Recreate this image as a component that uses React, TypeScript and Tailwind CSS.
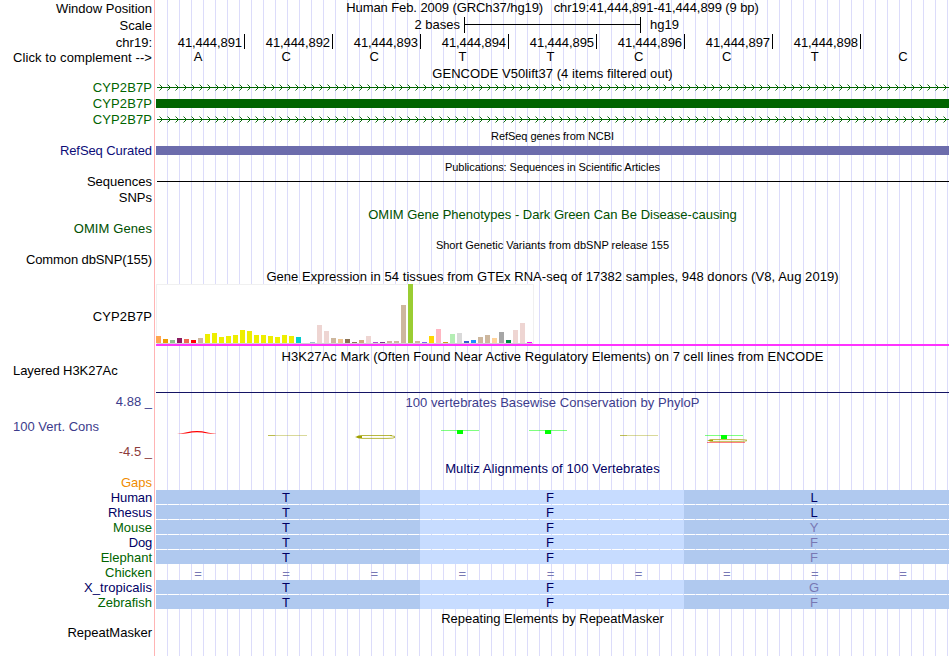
import React from "react";

interface Label {
  text: string;
  height: string;
  color?: string;
  left?: boolean;
  tracking?: string;
}

interface Species {
  name: string;
  residues: string[] | null;
}

const labels: Label[] = [
  { text: "Window Position", height: "h-[17px]" },
  { text: "Scale", height: "h-[17px]" },
  { text: "chr19:", height: "h-[15px]" },
  { text: "Click to complement -->", height: "h-[30px]", tracking: "tracking-[0.09px]" },
  { text: "CYP2B7P", height: "h-[16px]", color: "text-[#006400]", tracking: "tracking-[0.1px]" },
  { text: "CYP2B7P", height: "h-[16px]", color: "text-[#006400]", tracking: "tracking-[0.1px]" },
  { text: "CYP2B7P", height: "h-[31px]", color: "text-[#006400]", tracking: "tracking-[0.1px]" },
  { text: "RefSeq Curated", height: "h-[31px]", color: "text-[#0c0c78]", tracking: "tracking-[-0.08px]" },
  { text: "Sequences", height: "h-[16px]" },
  { text: "SNPs", height: "h-[31px]" },
  { text: "OMIM Genes", height: "h-[31px]", color: "text-[#005000]", tracking: "tracking-[0.1px]" },
  { text: "Common dbSNP(155)", height: "h-[57px]", tracking: "tracking-[-0.11px]" },
  { text: "CYP2B7P", height: "h-[54px]", tracking: "tracking-[0.1px]" },
  { text: "Layered H3K27Ac", height: "h-[31px]", left: true, tracking: "tracking-[-0.06px]" },
  { text: "4.88 _", height: "h-[25px]", color: "text-[#3c3c8c]" },
  { text: "100 Vert. Cons", height: "h-[25px]", color: "text-[#3c3c8c]", left: true },
  { text: "-4.5 _", height: "h-[31px]", color: "text-[#8c3c3c]" },
  { text: "Gaps", height: "h-[15px]", color: "text-[#f08c00]" },
  { text: "Human", height: "h-[15px]", color: "text-[#000064]", tracking: "tracking-[-0.15px]" },
  { text: "Rhesus", height: "h-[15px]", color: "text-[#000064]" },
  { text: "Mouse", height: "h-[15px]", color: "text-[#006400]" },
  { text: "Dog", height: "h-[15px]", color: "text-[#000064]", tracking: "tracking-[-0.2px]" },
  { text: "Elephant", height: "h-[15px]", color: "text-[#006400]" },
  { text: "Chicken", height: "h-[15px]", color: "text-[#006400]" },
  { text: "X_tropicalis", height: "h-[15px]", color: "text-[#000064]", tracking: "tracking-[0.06px]" },
  { text: "Zebrafish", height: "h-[30px]", color: "text-[#006400]" },
  { text: "RepeatMasker", height: "h-[15px]" },
];

const positions = [
  "41,444,891",
  "41,444,892",
  "41,444,893",
  "41,444,894",
  "41,444,895",
  "41,444,896",
  "41,444,897",
  "41,444,898",
];

const bases = ["A", "C", "C", "T", "T", "C", "C", "T", "C"];

// [height, colour] per GTEx tissue
const tissues: [number, string][] = [
  [7, "#ffa54f"], [4, "#ee9a00"], [3, "#8fbc8f"], [5, "#8b1c62"], [4, "#ee6a50"],
  [3, "#ff0000"], [5, "#cdb79e"], [9, "#eeee00"], [10, "#eeee00"], [6, "#eeee00"],
  [7, "#eeee00"], [8, "#eeee00"], [13, "#eeee00"], [12, "#eeee00"], [8, "#eeee00"],
  [8, "#eeee00"], [7, "#eeee00"], [6, "#eeee00"], [8, "#eeee00"], [7, "#eeee00"],
  [6, "#00cdcd"], [0, "#ee82ee"], [1, "#9ac0cd"], [18, "#eed5d2"], [12, "#eed5d2"],
  [5, "#cdb79e"], [4, "#eec591"], [4, "#8b7355"], [1, "#8b7355"], [3, "#cdaa7d"],
  [7, "#eed5d2"], [1, "#b452cd"], [1, "#7a378b"], [2, "#cdb79e"], [2, "#cdb79e"],
  [38, "#cdb79e"], [59, "#9acd32"], [2, "#cdb79e"], [1, "#7a67ee"], [7, "#ffd700"],
  [14, "#ffb6c1"], [1, "#cd9b1d"], [9, "#b4eeb4"], [10, "#d9d9d9"], [2, "#3a5fcd"],
  [3, "#1e90ff"], [6, "#cdb79e"], [8, "#cdb79e"], [5, "#ffd39b"], [11, "#a6a6a6"],
  [3, "#008b45"], [13, "#eed5d2"], [20, "#eed5d2"], [1, "#ff00ff"],
];

const species: Species[] = [
  { name: "Human", residues: ["T", "F", "L"] },
  { name: "Rhesus", residues: ["T", "F", "L"] },
  { name: "Mouse", residues: ["T", "F", "Y"] },
  { name: "Dog", residues: ["T", "F", "F"] },
  { name: "Elephant", residues: ["T", "F", "F"] },
  { name: "Chicken", residues: null },
  { name: "X_tropicalis", residues: ["T", "F", "G"] },
  { name: "Zebrafish", residues: ["T", "F", "F"] },
];

const Title = ({ text, className }: { text: string; className?: string }) => (
  <div className={`whitespace-pre text-center ${className ?? ""}`}>{text}</div>
);

const Intron = ({ className }: { className?: string }) => (
  <svg width="793" height="13" className={`block ${className ?? ""}`} fill="none" stroke="#006400">
    <path d="M1 6.5H793" />
    {Array.from({ length: 99 }, (_, i) => (
      <path key={i} d={`M${i * 8 + 3.5} 3.5L${i * 8 + 6.5} 6.5L${i * 8 + 3.5} 9.5`} strokeWidth="0.95" />
    ))}
  </svg>
);

const Expression = () => (
  <div className="flex h-[60px] w-[378px] items-end gap-[2px] border border-b-0 border-[#f0f0f0] bg-white shadow-[inset_0_-1px_0_#d2d2d2]">
    {tissues.map(([height, color], i) => (
      <div
        key={i}
        className="-mt-px mb-px w-[5px] shrink-0 first:-ml-px"
        style={{ height, backgroundColor: color }}
      />
    ))}
  </div>
);

const ConservationLogo = () => (
  <svg width="793" height="30" className="mt-[10px] block">
    <path d="M21 14Q31 12.5 36 11.3Q41 10.6 46 11.3Q52 12.8 61 14Q51 13.8 46 12.6Q41 11.8 36 12.6Q31 13.8 21 14Z" fill="#ff0000" />
    <path d="M112 15.5H151" stroke="#a0a000" strokeOpacity="0.4" />
    <path d="M112 15.5H119" stroke="#a0a000" strokeOpacity="0.5" />
    <path d="M236 15.5H205Q201 15.8 201 16.8Q201 18.2 206 18.4H231Q238 18.4 239 17.4" fill="none" stroke="#a0a000" strokeOpacity="0.75" />
    <path d="M234 15.5L239 16.5" stroke="#a0a000" strokeOpacity="0.7" />
    <path d="M199 17L202 16H206V18H202Z" fill="#a0a000" />
    <path d="M285 10.5H323M373 10.5H411M549 15.5H587" stroke="#00ff00" strokeOpacity="0.5" />
    <path d="M301 10H307V14H301ZM389 10H395V14H389ZM565 15H571V19H565Z" fill="#00ff00" />
    <path d="M464 15.5H502" stroke="#a0a000" strokeOpacity="0.4" />
    <path d="M464 15.5H471" stroke="#a0a000" strokeOpacity="0.45" />
    <path d="M591 20.2Q588 19.5 583 19.5H557Q553 19.6 553 20.4Q553 21.4 558 21.4H583Q590 21.4 591 20.7" fill="none" stroke="#a0a000" strokeWidth="0.9" strokeOpacity="0.75" />
    <path d="M551 20.5L554 19.7H557V21.3H554Z" fill="#a0a000" />
    <path d="M551 22.5H589" stroke="#ff0000" strokeOpacity="0.5" />
  </svg>
);

const Alignment = ({ residues }: Species) => {
  if (!residues) {
    return (
      <div className="flex h-[15px] pt-px text-[#7878b4]">
        {bases.map((_, i) => (
          <span key={i} className="flex-1 pr-1 text-center">=</span>
        ))}
      </div>
    );
  }
  return (
    <div className="mb-px flex h-[14px] text-center text-[#000064]">
      <span className="w-[264px] bg-[#b0c9ef] pr-1">{residues[0]}</span>
      <span className="w-[264px] bg-[#c7dcff] pr-1">{residues[1]}</span>
      <span
        className={`w-[265px] bg-[#b0c9ef] pr-[5px] ${residues[2] === "L" ? "" : "text-[#7878b4]"}`}
      >
        {residues[2]}
      </span>
    </div>
  );
};

const App = () => {
  return (
    <div className="flex h-[656px] w-[950px] overflow-hidden bg-white font-['Liberation_Sans',Arial,sans-serif] text-[13px] leading-[15px] text-black">
      <div className="flex w-[154px] shrink-0 flex-col pt-px pr-[2px] text-right">
        {labels.map((label, i) => (
          <div
            key={i}
            className={`shrink-0 whitespace-nowrap ${label.height} ${label.color ?? ""} ${label.tracking ?? ""} ${label.left ? "pl-[13px] text-left" : ""}`}
          >
            {label.text}
          </div>
        ))}
      </div>
      <div className="mr-px w-px shrink-0 bg-[#ffb4b4]" />
      <div className="flex w-[793px] flex-col bg-[repeating-linear-gradient(to_right,transparent_0,transparent_11px,#dcdcfa_11px,#dcdcfa_12px)]">
        <Title
          text="Human Feb. 2009 (GRCh37/hg19)   chr19:41,444,891-41,444,899 (9 bp)"
          className="tracking-[-0.09px]"
        />
        <div className="mt-[2px] flex h-4">
          <span className="w-[308px] pr-1 text-right">2 bases</span>
          <div className="flex w-[177px] items-center border-x border-black pb-px">
            <div className="h-px w-full bg-black" />
          </div>
          <span className="pl-[9px]">hg19</span>
        </div>
        <div className="mt-px flex h-[15px] pl-px">
          {positions.map((position) => (
            <div
              key={position}
              className="w-[88px] border-r border-black pt-px pr-[2px] text-right tracking-[-0.08px]"
            >
              {position}
            </div>
          ))}
        </div>
        <div className="flex h-[15px]">
          {bases.map((base, i) => (
            <span key={i} className="flex-1 pr-1 text-center">{base}</span>
          ))}
        </div>

        <Title text="GENCODE V50lift37 (4 items filtered out)" className="mt-[2px] tracking-[0.05px]" />
        <Intron />
        <div className="mt-[5px] h-[9px] bg-[#006400]" />
        <Intron className="mt-[5px]" />

        <Title text="RefSeq genes from NCBI" className="mt-1 text-[11px] leading-[13px] tracking-[-0.05px]" />
        <div className="mt-[3px] h-[9px] bg-[#6c6cac]" />

        <Title
          text="Publications: Sequences in Scientific Articles"
          className="mt-[6px] text-[11px] leading-[13px] tracking-[-0.06px]"
        />
        <div className="mt-[7px] ml-px h-px bg-black" />

        <Title
          text="OMIM Gene Phenotypes - Dark Green Can Be Disease-causing"
          className="mt-[25px] text-[#005000]"
        />
        <Title
          text="Short Genetic Variants from dbSNP release 155"
          className="mt-[17px] text-[11px] leading-[13px]"
        />

        <Title
          text="Gene Expression in 54 tissues from GTEx RNA-seq of 17382 samples, 948 donors (V8, Aug 2019)"
          className="mt-[17px] tracking-[0.055px]"
        />
        <Expression />
        <div className="h-[2px] bg-[#ff33ff]" />

        <Title
          text="H3K27Ac Mark (Often Found Near Active Regulatory Elements) on 7 cell lines from ENCODE"
          className="mt-[3px] tracking-[0.05px]"
        />
        <div className="mt-[28px] h-px bg-[#141464]" />

        <Title
          text="100 vertebrates Basewise Conservation by PhyloP"
          className="mt-[2px] tracking-[0.04px] text-[#3c3c8c]"
        />
        <ConservationLogo />

        <Title
          text="Multiz Alignments of 100 Vertebrates"
          className="mt-[11px] tracking-[0.1px] text-[#000064]"
        />
        <div className="mt-[14px]">
          {species.map((s) => (
            <Alignment key={s.name} {...s} />
          ))}
        </div>

        <Title text="Repeating Elements by RepeatMasker" className="mt-px" />
      </div>
    </div>
  );
};

export default App;
